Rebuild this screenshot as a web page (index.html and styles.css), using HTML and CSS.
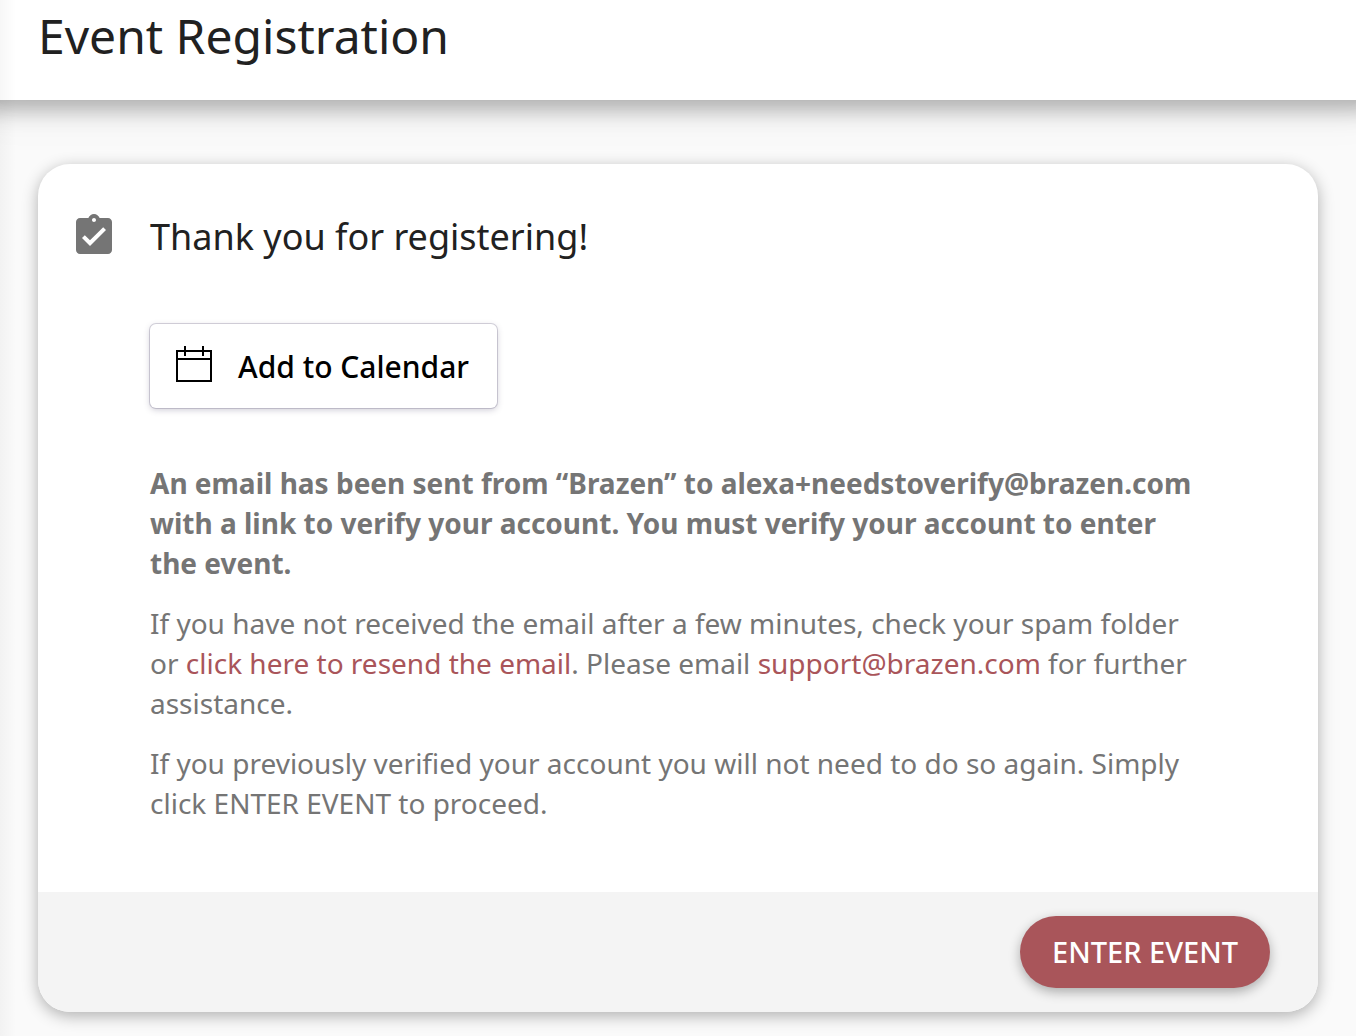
FILE: index.html
```html
<!DOCTYPE html>
<html lang="en">
<head>
    <meta charset="UTF-8">
    <meta name="viewport" content="width=device-width, initial-scale=1.0">
    <title>Event Registration</title>
    <link rel="stylesheet" href="styles.css">
</head>
<body>

<header class="page-header">
    <h1>Event Registration</h1>
</header>

<main class="page-content">
    <section class="card">
        <div class="card-body">
            <svg class="card-icon" viewBox="0 0 24 24" aria-hidden="true">
                <path fill="currentColor" d="M19 3h-4.180C14.400 1.840 13.300 1 12 1c-1.300 0-2.400.840-2.820 2H5c-1.100 0-2 .9-2 2v14c0 1.100.9 2 2 2h14c1.100 0 2-.9 2-2V5c0-1.100-.9-2-2-2zm-7 0c.55 0 1 .45 1 1s-.45 1-1 1-1-.45-1-1 .45-1 1-1zm-2 14l-4-4 1.410-1.410L10 14.170l6.590-6.590L18 9l-8 8z"/>
            </svg>
            <div class="card-text">
                <h2>Thank you for registering!</h2>

                <button type="button" class="calendar-button">
                    <svg class="calendar-icon" viewBox="0 0 36 36" aria-hidden="true">
                        <path fill="none" stroke="currentColor" stroke-width="2" d="M1 5h34v30H1zM1 13h34M9 0v10M27 0v10"/>
                    </svg>
                    Add to Calendar
                </button>

                <p class="notice">An email has been sent from “Brazen” to alexa+needstoverify@brazen.com with a link to verify your account. You must verify your account to enter the event.</p>
                <p>If you have not received the email after a few minutes, check your spam folder or <a href="#">click here to resend the email</a>. Please email <a href="mailto:support@brazen.com">support@brazen.com</a> for further assistance.</p>
                <p>If you previously verified your account you will not need to do so again. Simply click ENTER EVENT to proceed.</p>
            </div>
        </div>

        <div class="card-footer">
            <button type="button" class="enter-button">ENTER EVENT</button>
        </div>
    </section>
</main>

</body>
</html>
```

FILE: styles.css
```css
* {
    box-sizing: border-box;
}

body {
    position: relative;
    margin: 0;
    background-color: #fafafa;
    color: #212121;
    font-family: "Noto Sans", sans-serif;
}

/* soft shade along the left edge of the page */
body::before {
    content: "";
    position: absolute;
    top: 0;
    bottom: 0;
    left: 0;
    width: 16px;
    background: linear-gradient(to right, rgba(0, 0, 0, 0.03), rgba(0, 0, 0, 0));
    pointer-events: none;
}

h1,
h2 {
    margin: 0;
    font-weight: 400;
}

.page-header {
    padding: 4px 38px 32px;
    background-color: #fff;
    box-shadow: 0 -10px 20px 20px rgba(0, 0, 0, 0.27), 0 -4px 40px 20px rgba(0, 0, 0, 0.05);
}

h1 {
    font-size: 48px;
    line-height: 64px;
}

.page-content {
    padding: 64px 38px 24px;
}

.card {
    overflow: hidden;
    border-radius: 32px;
    background-color: #fff;
    box-shadow: 0 4px 16px rgba(0, 0, 0, 0.3);
}

.card-body {
    display: flex;
    gap: 32px;
    padding: 48px 112px 69px 32px;
}

.card-icon {
    flex: none;
    width: 48px;
    height: 48px;
    color: #757575;
}

h2 {
    font-size: 36px;
    line-height: 50px;
}

.calendar-button {
    display: flex;
    align-items: flex-start;
    gap: 26px;
    margin: 62px 0 55px;
    padding: 22px 28px 20px 26px;
    border: none;
    border-radius: 6px;
    background-color: #fff;
    color: #000;
    font-family: inherit;
    font-size: 30px;
    font-weight: 500;
    line-height: 42px;
    box-shadow: 0 0 0 1px rgba(60, 50, 90, 0.2), 0 2px 6px rgba(60, 50, 90, 0.25);
    cursor: pointer;
}

.calendar-icon {
    width: 36px;
    height: 36px;
}

p {
    margin: 0 0 20px;
    color: #757575;
    font-size: 28px;
    line-height: 40px;
}

p:last-child {
    margin-bottom: 0;
}

.notice {
    font-weight: 700;
}

a {
    color: #a9555a;
    text-decoration: none;
}

.card-footer {
    display: flex;
    justify-content: flex-end;
    padding: 24px 48px;
    background-color: #f4f4f4;
}

.enter-button {
    padding: 0 32px;
    border: none;
    border-radius: 36px;
    background-color: #a9555a;
    color: #fff;
    font-family: inherit;
    font-size: 29px;
    font-weight: 500;
    line-height: 72px;
    box-shadow: 0 4px 12px rgba(0, 0, 0, 0.3);
    cursor: pointer;
}
```
